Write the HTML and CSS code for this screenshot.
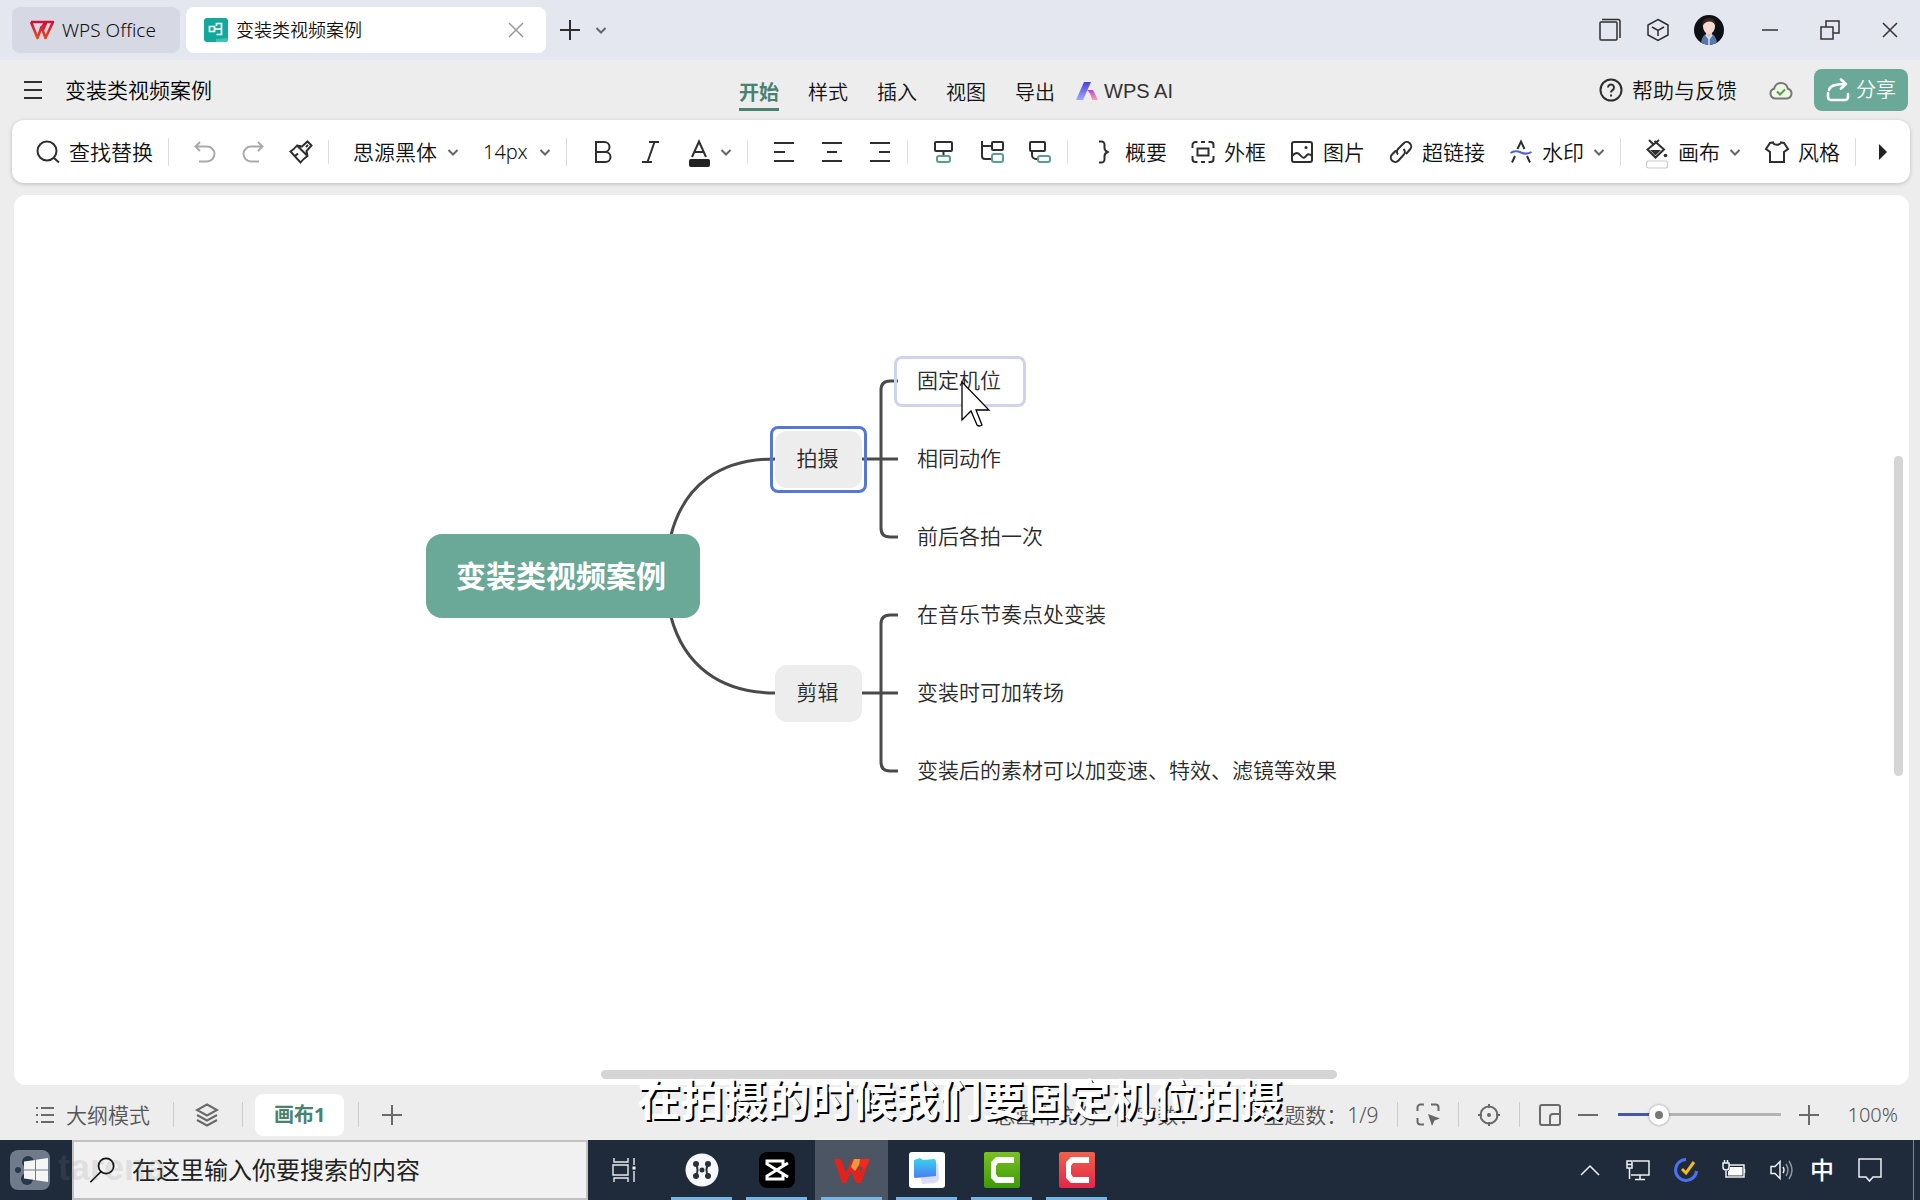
FILE: index.html
```html
<!DOCTYPE html>
<html lang="zh-CN">
<head>
<meta charset="utf-8">
<title>变装类视频案例 - WPS Office</title>
<link rel="stylesheet" href="styles.css">
</head>
<body>
<svg class="defs" aria-hidden="true">
  <defs>
    <linearGradient id="g-wps" x1="0" y1="0" x2="0" y2="1"><stop offset="0" stop-color="#cf0f3c"/><stop offset="1" stop-color="#e8481f"/></linearGradient>
    <linearGradient id="g-ai1" x1="0" y1="0" x2="0" y2="1"><stop offset="0" stop-color="#4b3fe0"/><stop offset="1" stop-color="#9fa8ff"/></linearGradient>
    <linearGradient id="g-ai2" x1="0" y1="0" x2="0" y2="1"><stop offset="0" stop-color="#c43fd6"/><stop offset="1" stop-color="#f6a3b4"/></linearGradient>
    <linearGradient id="g-folder" x1="0" y1="0" x2="0" y2="1"><stop offset="0" stop-color="#35d6ee"/><stop offset="1" stop-color="#4a7cf5"/></linearGradient>
    <linearGradient id="g-green" x1="0" y1="0" x2="0" y2="1"><stop offset="0" stop-color="#7ac21f"/><stop offset="1" stop-color="#3b9a09"/></linearGradient>
    <linearGradient id="g-red" x1="0" y1="0" x2="0" y2="1"><stop offset="0" stop-color="#f2614a"/><stop offset="1" stop-color="#e3264a"/></linearGradient>
    <symbol id="chev" viewBox="0 0 12 12"><path d="M1.5 4l4.5 4.500 4.500-4.500"/></symbol>
    <symbol id="x" viewBox="0 0 16 16"><path d="M1 1l14 14M15 1L1 15"/></symbol>
    <symbol id="plus" viewBox="0 0 24 24"><path d="M12 2v20M2 12h20"/></symbol>
  </defs>
</svg>

<header class="titlebar">
  <button class="tab tab-home">
    <svg class="icon" viewBox="0 0 24 24" fill="none" stroke="url(#g-wps)" stroke-width="2.600" stroke-linejoin="round"><path d="M1 4h14.500L11 11M1 4l6.500 16L11.500 9l4 11L23 4h-6.500L13 12"/></svg>
    WPS Office
  </button>
  <div class="tab tab-doc">
    <svg class="icon" viewBox="0 0 24 24"><rect width="24" height="24" rx="3" fill="#12a99c"/><path d="M24 20v1a3 3 0 0 1-3 3h-9v-3z" fill="#3cc5b6"/><path d="M5.500 8.500h5v5h-5zM10.500 11H17.500M12.500 8V5.500h5v11h-5" fill="none" stroke="#fff" stroke-width="1.700"/></svg>
    <span>变装类视频案例</span>
    <button class="tab-close" aria-label="关闭标签"><svg class="i16 line"><use href="#x"/></svg></button>
  </div>
  <button class="new-tab" aria-label="新建"><svg class="icon line"><use href="#plus"/></svg></button>
  <button aria-label="更多标签"><svg class="i12 line"><use href="#chev"/></svg></button>
  <div class="window-tools">
    <button aria-label="标签管理"><svg class="icon line thin" viewBox="0 0 24 24"><rect x="2" y="4" width="17" height="18" rx="1"/><path d="M4 1.500h16a2 2 0 0 1 2 2V20"/></svg></button>
    <button aria-label="应用"><svg class="icon line thin" viewBox="0 0 24 24"><path d="M12 1.500l10 5.500v10l-10 5.500L2 17V7zM6 9l6 3.500L18 9M12 12.500V18"/></svg></button>
    <button aria-label="账户"><svg class="avatar" viewBox="0 0 30 30"><clipPath id="c-av"><circle cx="15" cy="15" r="15"/></clipPath><g clip-path="url(#c-av)"><rect width="30" height="30" fill="#0d1116"/><path d="M7 30c0-8 4-12 8-12s8 4 8 12z" fill="#5877ab"/><path d="M12 17h6v3l-3 3-3-3z" fill="#e6c3b4"/><ellipse cx="15" cy="11.500" rx="6" ry="7.500" fill="#f4dbd0"/><path d="M8.500 11C8 4 12 2.500 16 3c4 0 6 3 5.500 8-1-3-3-4.500-6-4.500S10 8 8.500 11z" fill="#3c2623"/><path d="M15 23v7M12 20l3 4 3-4" fill="none" stroke="#d7e0f2" stroke-width="1.500"/></g></svg></button>
    <button class="win" aria-label="最小化"><svg class="i16 line thin" viewBox="0 0 16 16"><path d="M0 8h16"/></svg></button>
    <button class="win" aria-label="还原"><svg class="i20 line thin" viewBox="0 0 20 20"><path d="M1 7h12v12H1zM6 7V1h13v12h-6"/></svg></button>
    <button class="win" aria-label="关闭"><svg class="i16 line thin"><use href="#x"/></svg></button>
  </div>
</header>

<div class="menubar">
  <div class="menu-left">
    <button aria-label="菜单"><svg class="i20 line" viewBox="0 0 20 20"><path d="M1 2h18M1 10h18M1 18h18"/></svg></button>
    <h1>变装类视频案例</h1>
  </div>
  <nav class="menu">
    <a href="#" class="active">开始</a><a href="#">样式</a><a href="#">插入</a><a href="#">视图</a><a href="#">导出</a>
    <a href="#" class="ai"><svg class="icon" viewBox="0 0 24 24"><path d="M9 3h7L8 21H1z" fill="url(#g-ai1)"/><path d="M12 11h6l5 10h-6c-1-5-2-7-5-10z" fill="url(#g-ai2)"/></svg>WPS AI</a>
  </nav>
  <div class="menu-right">
    <button class="help"><svg class="icon line" viewBox="0 0 24 24"><circle cx="12" cy="12" r="10.500"/><path d="M9 9.500a3 3 0 1 1 4.500 2.600C12.300 12.800 12 13.300 12 14.500M12 16.500v2"/></svg>帮助与反馈</button>
    <button class="cloud" aria-label="已同步"><svg class="icon" viewBox="0 0 24 24" fill="#eef8e6" stroke="#777" stroke-width="2"><path d="M6 20.500a5 5 0 0 1-.8-9.800 6.900 6.900 0 0 1 13.600 0A5 5 0 0 1 18 20.500z"/><path d="M8 13.500l3 3 5-5" fill="none" stroke="#5b9a4c"/></svg></button>
    <button class="share"><svg class="icon" viewBox="0 0 24 24" fill="none" stroke="#fff" stroke-width="2.600" stroke-linecap="round" stroke-linejoin="round"><path d="M2 15v4a3 3 0 0 0 3 3h14a3 3 0 0 0 3-3v-3M3 12c1-4 5-6 17-6M15 1.500L20 6l-5 4.500"/></svg>分享</button>
  </div>
</div>

<div class="toolbar" role="toolbar">
  <div class="group">
    <button><svg class="icon line" viewBox="0 0 24 24"><circle cx="11" cy="11" r="9.500"/><path d="M18 18l5 4.500"/></svg>查找替换</button>
  </div>
  <div class="group">
    <button aria-label="撤销" class="off"><svg class="icon line" viewBox="0 0 24 24"><path d="M7 2L2.500 6.500 7 11M3 6.500h11a7.500 7.500 0 0 1 0 15H6"/></svg></button>
    <button aria-label="重做" class="off"><svg class="icon line" viewBox="0 0 24 24"><path d="M17 2l4.500 4.500L17 11M21 6.500H10a7.500 7.500 0 0 0 0 15h8"/></svg></button>
    <button aria-label="格式刷"><svg class="icon line" viewBox="0 0 24 24"><path d="M8 5.500l5 1 5.500-5 4 4-5 5.500 1 5c-3 2-5 4-7 6.500L1.500 11.500C4 10 6 8 8 5.500zM8 5.500l10.500 10.500M6 16l3-2.500M17 7l2-2"/></svg></button>
  </div>
  <div class="group">
    <label class="pick"><select class="font" aria-label="字体"><option>思源黑体</option></select><svg class="i12 line"><use href="#chev"/></svg></label>
    <label class="pick"><select class="size" aria-label="字号"><option>14px</option></select><svg class="i12 line"><use href="#chev"/></svg></label>
  </div>
  <div class="group">
    <button aria-label="加粗"><svg class="icon line" viewBox="0 0 24 24"><path d="M5 2h8.500a5 5 0 0 1 0 10H5zM5 12h9.500a5 5 0 0 1 0 10H5z"/></svg></button>
    <button aria-label="倾斜"><svg class="icon line" viewBox="0 0 24 24"><path d="M10 2h10M3 22h10M15.500 2l-7 20"/></svg></button>
    <button aria-label="字体颜色"><svg class="icon line" viewBox="0 0 24 24"><path d="M5 17L12 1.500 19 17M7.500 12h9"/><rect x="2" y="19" width="21" height="8" rx="2" fill="#222" stroke="none"/></svg><svg class="i12 line"><use href="#chev"/></svg></button>
  </div>
  <div class="group">
    <button aria-label="左对齐"><svg class="icon line" viewBox="0 0 24 24"><path d="M2 3h20M2 12h11M2 21h20"/></svg></button>
    <button aria-label="居中对齐"><svg class="icon line" viewBox="0 0 24 24"><path d="M2 3h20M7 12h10M2 21h20"/></svg></button>
    <button aria-label="右对齐"><svg class="icon line" viewBox="0 0 24 24"><path d="M2 3h20M11 12h11M2 21h20"/></svg></button>
  </div>
  <div class="group">
    <button aria-label="子主题"><svg class="icon line" viewBox="0 0 24 24"><rect x="3" y="2" width="17" height="9" rx="1"/><path d="M11.500 11v5"/><rect class="accent" x="5" y="16" width="13" height="6" rx="2"/></svg></button>
    <button aria-label="同级主题"><svg class="icon line" viewBox="0 0 24 24"><rect x="12" y="2" width="11" height="8" rx="1"/><path d="M2 1v15a3 3 0 0 0 3 3h7M2 6h10"/><rect class="accent" x="12" y="14" width="11" height="8" rx="2"/></svg></button>
    <button aria-label="父主题"><svg class="icon line" viewBox="0 0 24 24"><rect x="2" y="2" width="15" height="9" rx="1"/><path d="M4 11v4a4 4 0 0 0 4 4h2"/><rect class="accent" x="10" y="16" width="12" height="6" rx="2"/></svg></button>
  </div>
  <div class="group">
    <button><svg class="icon line" viewBox="0 0 24 24"><path d="M7 1.500h2.500a3 3 0 0 1 3 3V8c0 2 1 3 3 4-2 1-3 2-3 4v3.500a3 3 0 0 1-3 3H7"/></svg>概要</button>
    <button><svg class="icon line" viewBox="0 0 24 24"><path d="M1.500 8V5a3 3 0 0 1 3-3h2M17.500 2h2a3 3 0 0 1 3 3v3M22.500 16v3a3 3 0 0 1-3 3h-2M6.500 22h-2a3 3 0 0 1-3-3v-3M10 2h4M10 22h4"/><rect x="6.500" y="8.500" width="11" height="7"/></svg>外框</button>
    <button><svg class="icon line" viewBox="0 0 24 24"><rect x="2" y="2" width="20" height="20" rx="2"/><path d="M2 16c4-4 6-4 9 0s5 0 6-1 3-1 5 1"/><circle cx="16" cy="7.500" r="1.500" fill="#2e2e2e" stroke="none"/></svg>图片</button>
    <button><svg class="icon line" viewBox="0 0 24 24"><path d="M9 14.500c-2-2-1-4.500.5-6l5-5a4.400 4.400 0 0 1 6.500 6l-4 4.500M14.500 9c2 2 1.500 4.500 0 6l-5 5.500a4.400 4.400 0 0 1-6.500-6l4-4"/></svg>超链接</button>
    <button><svg class="icon line" viewBox="0 0 24 24"><path d="M8.500 9L12 1.500 15.500 9M6 16l-3 6.500M18 16l3 6.500"/><path class="blue" d="M1.500 13c4-3 7-2 10.500-.5s6.500 2 10.500-.5"/></svg>水印<svg class="i12 line"><use href="#chev"/></svg></button>
  </div>
  <div class="group">
    <button><svg class="icon line" viewBox="0 0 24 24"><path d="M4 0l4.500 4.500M14 0L2.500 9.500l8 8L19 9.500 9.500 1"/><path d="M5 10h11l-5.500 5.500z" fill="#2e2e2e" stroke="none"/><circle cx="20.500" cy="15.500" r="1.800" fill="#2e2e2e" stroke="none"/><rect x="1.500" y="21" width="21" height="7" rx="2" fill="#fff" stroke="#ccc" stroke-width="1.200"/></svg>画布<svg class="i12 line"><use href="#chev"/></svg></button>
    <button><svg class="icon line" viewBox="0 0 24 24"><path d="M8 2.500c1 3 7 3 8 0l3 .5 4 6-4 3v10H5V12L1 9l4-6z"/></svg>风格</button>
  </div>
  <button class="more" aria-label="更多工具"><svg class="i16" viewBox="0 0 16 16"><path d="M4 0l8 8-8 8z" fill="#222"/></svg></button>
</div>

<main class="canvas">
  <svg class="links" viewBox="0 0 1400 700" aria-hidden="true">
    <path d="M657 340C670 290 706 264 761 264M657 422C670 470 706 498 761 498"/>
    <path d="M848 264h36M884 186h-8q-9 0-9 9v138q0 9 9 9h8M848 498h36M884 420h-8q-9 0-9 9v138q0 9 9 9h8"/>
  </svg>
  <div class="node root">变装类视频案例</div>
  <div class="node branch b1 selected">拍摄</div>
  <div class="node branch b2">剪辑</div>
  <div class="node leaf l1 hover">固定机位</div>
  <div class="node leaf l2">相同动作</div>
  <div class="node leaf l3">前后各拍一次</div>
  <div class="node leaf l4">在音乐节奏点处变装</div>
  <div class="node leaf l5">变装时可加转场</div>
  <div class="node leaf l6">变装后的素材可以加变速、特效、滤镜等效果</div>
  <div class="bar-v"></div>
  <div class="bar-h"></div>
  <svg class="cursor" viewBox="0 0 30 46" fill="#fff" stroke="#000" stroke-width="1.300"><path d="M1 1v38l9-9 6 14q2 2 5 0l-6-15h13z"/></svg>
</main>

<div class="statusbar">
  <button class="outline"><svg class="i20 line" viewBox="0 0 20 20"><path d="M6 3h13M6 10h13M6 17h13M1 3h2M1 10h2M1 17h2"/></svg>大纲模式</button>
  <i class="sep"></i>
  <button aria-label="图层"><svg class="icon line" viewBox="0 0 24 24"><path d="M12 1.500L22 7l-10 5.500L2 7zM2 12l10 5.500L22 12M2 17l10 5.500L22 17"/></svg></button>
  <i class="sep"></i>
  <button class="sheet">画布1</button>
  <i class="sep"></i>
  <button aria-label="添加画布"><svg class="icon line"><use href="#plus"/></svg></button>
  <div class="status-right">
    <span>总画布充分</span>
    <i class="sep"></i>
    <span>字数：</span>
    <span class="topics">主题数：1/9</span>
    <i class="sep"></i>
    <button aria-label="框选"><svg class="icon line" viewBox="0 0 24 24"><path d="M1.500 8V4.500a3 3 0 0 1 3-3H8M15 1.500h4.500a3 3 0 0 1 3 3V8M8 21.500H4.500a3 3 0 0 1-3-3V15"/><path d="M12 11l12 4.500-5.500 2L16 23z" fill="#666" stroke="none"/></svg></button>
    <i class="sep"></i>
    <button aria-label="定位"><svg class="icon line" viewBox="0 0 24 24"><circle cx="12" cy="12" r="8.500"/><path d="M12 1v4M12 19v4M1 12h4M19 12h4"/><circle cx="12" cy="12" r="2" fill="#666" stroke="none"/></svg></button>
    <i class="sep"></i>
    <button aria-label="导航图"><svg class="icon line" viewBox="0 0 24 24"><rect x="2" y="2" width="20" height="20" rx="2"/><path d="M22 11h-7a3 3 0 0 0-3 3v8"/></svg></button>
    <button class="zoom-out" aria-label="缩小"><svg class="icon line" viewBox="0 0 24 24"><path d="M2 12h20"/></svg></button>
    <input type="range" min="0" max="100" value="22" aria-label="缩放">
    <button aria-label="放大"><svg class="icon line"><use href="#plus"/></svg></button>
    <span class="percent">100%</span>
  </div>
</div>

<footer class="taskbar">
  <button class="start" aria-label="开始">
    <svg class="mark" viewBox="0 0 40 40"><rect width="40" height="40" rx="8" fill="#6f7b8a"/><circle cx="18" cy="12" r="6" fill="#27384c"/><circle cx="8" cy="20" r="3" fill="#27384c"/><circle cx="17" cy="29" r="6" fill="#27384c"/></svg>
    <svg class="icon" viewBox="0 0 24 24" fill="#f5f5f5"><path d="M0 3.500l11-1.500v9.500H0zM12 1.800L24 0v11.500H12zM0 12.500h11V22L0 20.500zM12 12.500h12V24l-12-1.800z"/></svg>
  </button>
  <label class="search">
    <svg class="i28" viewBox="0 0 24 24" fill="none" stroke="#111" stroke-width="1.500"><circle cx="15.500" cy="8.500" r="6.500"/><path d="M11 13.500L2 22.500"/></svg>
    <input type="text" placeholder="在这里输入你要搜索的内容" aria-label="搜索">
  </label>
  <span class="watermark" aria-hidden="true">tarena</span>
  <button class="app taskview" aria-label="任务视图"><svg class="icon" viewBox="0 0 24 24" fill="none" stroke="#e8ebee" stroke-width="1.400"><path d="M1 7h15v10H1zM2 0v4h14V0M2 24v-4h14v4M22 0v7M22 13v11"/><path d="M20.500 8.500h3v3h-3z" fill="#fff" stroke="none"/></svg></button>
  <button class="app open" aria-label="应用一"><svg class="i36" viewBox="0 0 36 36"><circle cx="18" cy="18" r="16.500" fill="#f6f8fd"/><g fill="#2c3038"><circle cx="12" cy="12" r="3"/><circle cx="12" cy="24" r="3"/><circle cx="24" cy="12" r="3"/><circle cx="24" cy="24" r="3"/><circle cx="18" cy="18" r="2.500"/></g><path d="M12 12c2 4 2 8 0 12M24 12c-2 4-2 8 0 12" fill="none" stroke="#2c3038" stroke-width="2"/></svg></button>
  <button class="app open" aria-label="剪映"><svg class="i36" viewBox="0 0 36 36"><rect width="36" height="36" rx="8" fill="#000"/><path d="M29 11L8 24v3h16v-5M29 25L8 12V9h16v5" fill="none" stroke="#fff" stroke-width="3"/></svg></button>
  <button class="app open current" aria-label="WPS"><svg class="i36" viewBox="0 0 36 36"><path d="M0 7h7l5 14 6-14h4l5 14 4-14h5L27 31h-5l-5-12-5 12H8z" fill="#e3231b"/><path d="M20 7h9l-8 12-4-4z" fill="#e89a3c"/><path d="M26 7h10l-5 10-6-3z" fill="#f02a20"/></svg></button>
  <button class="app open" aria-label="文件管理"><svg class="i36" viewBox="0 0 36 36"><rect width="36" height="36" rx="3" fill="#fff"/><path d="M10 18l19-7 1 15q0 4-5 5l-12 1z" fill="#d9dcfa"/><path d="M5 8l6-2 3 2 11-1q2 0 2 3v14l-21 2q-1 0-1-2z" fill="url(#g-folder)"/></svg></button>
  <button class="app open" aria-label="Camtasia"><svg class="i36" viewBox="0 0 36 36"><rect width="36" height="36" rx="2" fill="url(#g-green)"/><path d="M30 5v6H14l-2 3v8l2 3h16v6H12l-5-5V10l5-5z" fill="#fff"/></svg></button>
  <button class="app open" aria-label="录像机"><svg class="i36" viewBox="0 0 36 36"><rect width="36" height="36" rx="2" fill="url(#g-red)"/><path d="M30 5v6H14l-2 3v8l2 3h16v6H12l-5-5V10l5-5z" fill="#fff"/></svg></button>
  <div class="tray">
    <button aria-label="显示隐藏图标"><svg class="icon tline" viewBox="0 0 24 24"><path d="M3 17l9-9 9 9"/></svg></button>
    <button aria-label="网络"><svg class="icon tline" viewBox="0 0 24 24"><path d="M7 3h16v14H5M14 17v4M9 21.500h10M1 3h5v7H1zM1 6.500h5M3.500 10v11"/></svg></button>
    <button aria-label="待办"><svg class="icon" viewBox="0 0 24 24" fill="none"><path d="M12 1.500A10.500 10.500 0 1 0 22.500 13" stroke="#4f6ff2" stroke-width="3"/><path d="M8 11l4 4 8-11" stroke="#f5b81f" stroke-width="3"/></svg></button>
    <button aria-label="电源"><svg class="icon tline" viewBox="0 0 24 24"><path d="M7 7h15v12H4v-6M22.500 11v4M1 5h6v4q0 3-3 3t-3-3zM2.500 2v3M5.500 2v3"/><path d="M8 9h12.500v8.500H6V13q2-1 2-4z" fill="#fff" stroke="none"/></svg></button>
    <button aria-label="音量"><svg class="icon tline" viewBox="0 0 24 24"><path d="M1 8.500h4l5-5v17l-5-5H1zM13 9q2 3 0 6"/><path d="M16 6q4 6 0 12M19 3q6 9 0 18" stroke="#8c96a2"/></svg></button>
    <button class="ime">中</button>
    <button aria-label="通知"><svg class="icon tline" viewBox="0 0 24 24"><path d="M1 1h22v18h-8l-3.500 4-3.500-4H1z"/></svg></button>
  </div>
</footer>

<p class="caption">在拍摄的时候我们要固定机位拍摄</p>
</body>
</html>
```
FILE: styles.css
```css
* { box-sizing: border-box; }

body {
  position: relative;
  display: flex;
  flex-direction: column;
  min-height: 100vh;
  margin: 0;
  background: #ededed;
  color: #111;
  font: 350 21px/28px "Noto Sans", "Noto Sans CJK SC", sans-serif;
}

.defs { position: absolute; width: 0; height: 0; }

button {
  display: flex;
  align-items: center;
  gap: 9px;
  padding: 0;
  border: 0;
  background: none;
  color: inherit;
  font: inherit;
  white-space: nowrap;
}

svg { display: block; flex: none; overflow: visible; }
.i12 { width: 12px; height: 12px; }
.i16 { width: 16px; height: 16px; }
.i20 { width: 20px; height: 20px; }
.icon { width: 24px; height: 24px; }
.i28 { width: 28px; height: 28px; }
.i36 { width: 36px; height: 36px; }
.line { fill: none; stroke: #2e2e2e; stroke-width: 2; }
.line.i12 { stroke: #666; }
.line.thin { stroke-width: 1.500; }
.accent { stroke: #5c9f8c; }
.blue { stroke: #5563c8; }

/* Title bar */
.titlebar {
  display: flex;
  align-items: center;
  height: 60px;
  padding: 0 12px;
  background: #e4e6f0;
  font-size: 18px;
}
.tab {
  display: flex;
  align-items: center;
  gap: 8px;
  height: 46px;
  border-radius: 8px;
}
.tab-home { width: 168px; padding-left: 18px; background: #d6d8e3; font-size: 19px; }
.tab-doc { width: 360px; margin-left: 6px; padding: 0 22px 0 18px; background: #fff; }
.tab-close { margin-left: auto; }
.tab-close .line { stroke: #999; stroke-width: 1.500; }
.new-tab { margin: 0 13px 0 12px; }
.window-tools { display: flex; align-items: center; gap: 24px; margin-left: auto; }
.win { width: 36px; justify-content: center; }
.win svg { stroke: #333; }
.avatar { width: 30px; height: 30px; }
.window-tools .win:nth-child(4) { margin-left: 4px; }

/* Menu row */
.menubar {
  display: grid;
  grid-template-columns: 1fr auto 1fr;
  align-items: center;
  height: 60px;
  padding: 0 12px 0 4px;
}
.menu-left, .menu-right, .menu { display: flex; align-items: center; }
.menu-left { gap: 22px; padding-left: 19px; }
h1 { margin: 0; font-size: 21px; font-weight: 350; color: #000; }
.menu { gap: 29px; padding-top: 4px; font-size: 20px; }
.menu a {
  padding: 6px 0 1px;
  border-bottom: 3px solid transparent;
  color: inherit;
  text-decoration: none;
}
.menu a.active { border-color: #4a8270; color: #4a8270; font-weight: 700; }
.menu .ai {
  display: flex;
  align-items: center;
  gap: 5px;
  margin-left: -9px;
  padding: 2px 0;
  font-family: "Liberation Sans", sans-serif;
  color: #333;
}
.menu-right { justify-content: flex-end; }
.cloud { margin: 0 21px 0 32px; }
.share {
  gap: 6px;
  height: 42px;
  padding: 0 12px;
  border-radius: 8px;
  background: #6aa998;
  color: #fff;
  font-size: 20px;
}

/* Toolbar */
.toolbar {
  display: flex;
  align-items: center;
  height: 63px;
  margin: 0 10px 0 12px;
  border-radius: 12px;
  background: #fff;
  box-shadow: 0 1px 4px #0003;
}
.group {
  display: flex;
  align-items: center;
  gap: 24px;
  padding: 0 15px 0 24px;
  border-right: 1px solid #ddd;
}
.off .line { stroke: #aaa; }
.pick { display: flex; align-items: center; gap: 9px; }
select {
  appearance: none;
  padding: 0;
  border: 0;
  background: none;
  color: inherit;
  font: inherit;
}
.font { width: 85px; }
.size { width: 47px; font-size: 20px; }
.more { margin-left: auto; margin-right: 19px; }

/* Mind map canvas */
.canvas {
  position: relative;
  flex: 1;
  min-height: 700px;
  margin: 12px 11px 0 14px;
  overflow: hidden;
  border-radius: 12px;
  background: #fff;
  color: #2a2a2a;
}
.links {
  position: absolute;
  left: 0;
  top: 0;
  width: 1400px;
  height: 700px;
  fill: none;
  stroke: #4a4a4a;
  stroke-width: 3;
}
.node {
  position: absolute;
  display: flex;
  align-items: center;
  justify-content: center;
  padding-bottom: 4px;
  white-space: nowrap;
}
.root {
  left: 412px;
  top: 339px;
  width: 274px;
  height: 84px;
  padding: 0 4px 0 0;
  border-radius: 16px;
  background: #6aa998;
  color: #fff;
  font-size: 30px;
  font-weight: 700;
}
.branch { left: 761px; width: 87px; height: 57px; padding-right: 2px; border-radius: 12px; background: #ededed; }
.b1 { top: 236px; }
.b2 { top: 470px; }
.selected::before {
  content: "";
  position: absolute;
  inset: -5px;
  border: 3px solid #5777d4;
  border-radius: 8px;
}
.leaf { left: 880px; height: 51px; padding: 0 25px 4px 23px; }
.l1 { top: 161px; }
.l2 { top: 239px; }
.l3 { top: 317px; }
.l4 { top: 395px; }
.l5 { top: 473px; }
.l6 { top: 551px; }
.hover::before {
  content: "";
  position: absolute;
  inset: 0;
  border: 3px solid #d0d2ee;
  border-radius: 8px;
}
.bar-v, .bar-h { position: absolute; border-radius: 5px; background: #d5d5d5; }
.bar-v { right: 6px; top: 29.3%; width: 9px; height: 36%; }
.bar-h { left: 31%; bottom: 6px; width: 38.8%; height: 9px; }
.cursor { position: absolute; left: 947px; top: 186px; width: 30px; height: 46px; }

/* Status bar */
.statusbar {
  display: flex;
  align-items: center;
  height: 55px;
  padding: 4px 22px 0 35px;
  color: #555;
}
.statusbar .line { stroke: #6a6a6a; }
.outline { gap: 11px; }
.sep { width: 1px; height: 25px; margin: 0 21px 0 23px; background: #ccc; }
.sheet {
  height: 42px;
  margin: 0 -9px;
  padding: 0 19px;
  border-radius: 8px;
  background: #fff;
  color: #4a8270;
  font-size: 20px;
  font-weight: 700;
}
.status-right { display: flex; align-items: center; margin-left: auto; }
.status-right .sep { margin: 0 18px; }
.topics { margin-left: 64px; }
.zoom-out { margin: 0 18px 0 14px; }
input[type="range"] {
  appearance: none;
  width: 163px;
  height: 20px;
  margin: 0 16px 0 0;
  background: linear-gradient(90deg, #4856a8 26%, #b3b3b3 26%) center / 100% 3px no-repeat;
}
input[type="range"]::-webkit-slider-thumb {
  appearance: none;
  width: 20px;
  height: 20px;
  border: 6px solid #fff;
  border-radius: 50%;
  background: #777;
  box-shadow: 0 0 3px #0006;
}
.percent { margin-left: 27px; font-size: 20px; }

/* Taskbar */
.taskbar {
  position: relative;
  display: flex;
  height: 60px;
  padding-right: 38px;
  background: #1f2b3b;
}
.taskbar::after {
  content: "";
  position: absolute;
  right: 6px;
  top: 0;
  width: 1px;
  height: 100%;
  background: #7b848f;
}
.start { position: relative; width: 72px; justify-content: center; }
.mark { position: absolute; left: 10px; top: 10px; width: 40px; height: 40px; }
.start .icon { position: relative; }
.search {
  display: flex;
  align-items: center;
  gap: 16px;
  width: 516px;
  padding-left: 14px;
  border: 2px solid #c2c2c2;
  background: #f1f1f1;
}
.search input {
  flex: 1;
  min-width: 0;
  padding: 0;
  border: 0;
  background: none;
  color: #222;
  font: inherit;
  font-size: 24px;
  font-weight: 400;
}
.search input::placeholder { color: #222; opacity: 1; }
.watermark {
  position: absolute;
  left: 58px;
  top: 6px;
  color: #8888;
  font: 700 36px/44px "Liberation Sans", sans-serif;
  opacity: 0.3;
}
.app { position: relative; justify-content: center; width: 75px; }
.taskview { width: 72px; margin-right: 4px; }
.current::before { content: ""; position: absolute; inset: 0 1px; background: #4b5563; }
.current svg { position: relative; }
.open::after {
  content: "";
  position: absolute;
  left: 7px;
  right: 7px;
  bottom: 0;
  height: 3px;
  background: #76b4e3;
}
.tray { display: flex; align-items: center; gap: 24px; margin-left: auto; color: #fff; }
.tline { fill: none; stroke: #eef1f4; stroke-width: 1.500; }
.ime { margin-left: -8px; font-size: 24px; font-weight: 500; }

/* Video caption */
.caption {
  position: absolute;
  left: 0;
  right: 0;
  bottom: 72px;
  margin: 0;
  color: #fff;
  font-size: 43px;
  font-weight: 700;
  line-height: 56px;
  text-align: center;
  text-shadow: 2px 2px 0 #000;
  pointer-events: none;
}
```
